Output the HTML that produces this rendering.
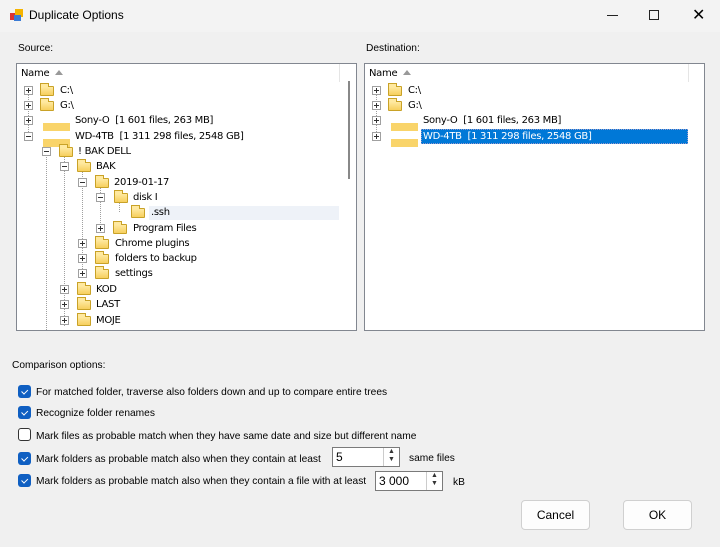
<!DOCTYPE html>
<html><head><meta charset="utf-8"><style>
*{margin:0;padding:0;box-sizing:border-box}
body{width:720px;height:547px;background:#f0f0f0;font-family:"Liberation Sans",sans-serif;font-size:12px;color:#000;position:relative;overflow:hidden}
.a{position:absolute;white-space:nowrap}
.title{left:0;top:0;width:720px;height:32px;background:#f3f3f3}
.pane{background:#fff;border:1px solid #828790}
.t{font-family:"DejaVu Sans",sans-serif;font-size:10px;line-height:14px;letter-spacing:-0.3px;margin-top:1px}
.ex{width:9px;height:9px;border:1px solid #a0a0a0;background:#fff}
.ex:before{content:"";position:absolute;left:1px;top:3px;width:5px;height:1px;background:#333}
.ex.p:after{content:"";position:absolute;left:3px;top:1px;width:1px;height:5px;background:#333}
.f{width:14px;height:10px;border:1px solid #c9a227;background:linear-gradient(#ffe9a0,#f7cf5e);border-radius:1px;margin-top:1px}
.f:before{content:"";position:absolute;left:-1px;top:-4px;width:7px;height:3px;border:1px solid #c9a227;border-bottom:none;background:#ffe9a0}
.dr{width:27px;height:8px;background:#f9d46a}
.cb{width:13px;height:13px;border-radius:3px;background:#0f5fc2}
.cb:after{content:"";position:absolute;left:3px;top:2px;width:5px;height:3px;border-left:1.5px solid #fff;border-bottom:1.5px solid #fff;transform:rotate(-45deg) translate(-1px,2px)}
.cb.u{background:#fff;border:1px solid #333}
.cb.u:after{display:none}
.lbl{font-size:10.2px}
.o{margin-top:1px}
.spin{height:20px;background:#fff;border:1px solid #7a7a7a;font-size:12px;padding:2px 3px}
.btn{width:69px;height:30px;background:#fdfdfd;border:1px solid #d0d0d0;border-radius:4px;text-align:center;line-height:28px;font-size:12px}
.vl{border-left:1px dotted #a0a0a0}
</style></head><body>
<div class="a title"></div>
<div class="a" style="left:10px;top:9px;width:13px;height:12px">
<div class="a" style="left:0;top:4px;width:7px;height:7px;background:#d33"></div>
<div class="a" style="left:5px;top:0;width:8px;height:8px;background:#f5b400"></div>
<div class="a" style="left:4px;top:6px;width:7px;height:6px;background:#3a7bd5"></div></div>
<div class="a" style="left:29px;top:8px;font-size:12px">Duplicate Options</div>
<div class="a" style="left:607px;top:15px;width:11px;height:1px;background:#222"></div>
<div class="a" style="left:649px;top:10px;width:10px;height:10px;border:1px solid #222"></div>
<div class="a" style="left:692px;top:9px;font-size:16px;line-height:14px">✕</div>

<div class="a lbl" style="left:18px;top:43px">Source:</div>
<div class="a lbl" style="left:366px;top:43px">Destination:</div>

<div class="a pane" style="left:16px;top:63px;width:341px;height:268px;overflow:hidden">
<div class="a" style="left:331px;top:17px;width:2px;height:98px;background:#888"></div>
<div class="a" style="left:322px;top:0;width:1px;height:18px;background:#e5e5e5"></div>
</div>
<div class="a pane" style="left:364px;top:63px;width:341px;height:268px"><div class="a" style="left:323px;top:0;width:1px;height:18px;background:#e5e5e5"></div></div>

<div class="a t" style="left:21px;top:66px">Name</div>
<div class="a" style="left:55px;top:70px;border:4px solid transparent;border-bottom:5px solid #999;border-top:none"></div>
<div class="a t" style="left:369px;top:66px">Name</div>
<div class="a" style="left:403px;top:70px;border:4px solid transparent;border-bottom:5px solid #999;border-top:none"></div>

<div class="a vl" style="left:28px;top:92px;height:44px"></div>
<div class="a vl" style="left:46px;top:140px;height:190px"></div>
<div class="a vl" style="left:64px;top:156px;height:170px"></div>
<div class="a vl" style="left:82px;top:171px;height:104px"></div>
<div class="a vl" style="left:100px;top:186px;height:43px"></div>
<div class="a vl" style="left:119px;top:202px;height:10px"></div>
<div class="a" style="left:149px;top:206px;width:190px;height:14px;background:#eef2f8"></div>

<div class="a ex p" style="left:24px;top:86px"></div><div class="a f" style="left:40px;top:85px"></div><div class="a t" style="left:60px;top:83px">C:\</div>
<div class="a ex p" style="left:24px;top:101px"></div><div class="a f" style="left:40px;top:100px"></div><div class="a t" style="left:60px;top:98px">G:\</div>
<div class="a ex p" style="left:24px;top:116px"></div><div class="a dr" style="left:43px;top:123px"></div><div class="a t" style="left:75px;top:113px">Sony-O&nbsp; [1 601 files, 263 MB]</div>
<div class="a ex" style="left:24px;top:132px"></div><div class="a dr" style="left:43px;top:139px"></div><div class="a t" style="left:75px;top:129px">WD-4TB&nbsp; [1 311 298 files, 2548 GB]</div>
<div class="a ex" style="left:42px;top:147px"></div><div class="a f" style="left:59px;top:146px"></div><div class="a t" style="left:78px;top:144px">! BAK DELL</div>
<div class="a ex" style="left:60px;top:162px"></div><div class="a f" style="left:77px;top:161px"></div><div class="a t" style="left:96px;top:159px">BAK</div>
<div class="a ex" style="left:78px;top:178px"></div><div class="a f" style="left:95px;top:177px"></div><div class="a t" style="left:114px;top:175px">2019-01-17</div>
<div class="a ex" style="left:96px;top:193px"></div><div class="a f" style="left:114px;top:192px"></div><div class="a t" style="left:133px;top:190px">disk I</div>
<div class="a f" style="left:131px;top:207px"></div><div class="a t" style="left:151px;top:205px">.ssh</div>
<div class="a ex p" style="left:96px;top:224px"></div><div class="a f" style="left:113px;top:223px"></div><div class="a t" style="left:133px;top:221px">Program Files</div>
<div class="a ex p" style="left:78px;top:239px"></div><div class="a f" style="left:95px;top:238px"></div><div class="a t" style="left:115px;top:236px">Chrome plugins</div>
<div class="a ex p" style="left:78px;top:254px"></div><div class="a f" style="left:95px;top:253px"></div><div class="a t" style="left:115px;top:251px">folders to backup</div>
<div class="a ex p" style="left:78px;top:269px"></div><div class="a f" style="left:95px;top:268px"></div><div class="a t" style="left:115px;top:266px">settings</div>
<div class="a ex p" style="left:60px;top:285px"></div><div class="a f" style="left:77px;top:284px"></div><div class="a t" style="left:96px;top:282px">KOD</div>
<div class="a ex p" style="left:60px;top:300px"></div><div class="a f" style="left:77px;top:299px"></div><div class="a t" style="left:96px;top:297px">LAST</div>
<div class="a ex p" style="left:60px;top:316px"></div><div class="a f" style="left:77px;top:315px"></div><div class="a t" style="left:96px;top:313px">MOJE</div>

<div class="a vl" style="left:376px;top:92px;height:44px"></div>
<div class="a ex p" style="left:372px;top:86px"></div><div class="a f" style="left:388px;top:85px"></div><div class="a t" style="left:408px;top:83px">C:\</div>
<div class="a ex p" style="left:372px;top:101px"></div><div class="a f" style="left:388px;top:100px"></div><div class="a t" style="left:408px;top:98px">G:\</div>
<div class="a ex p" style="left:372px;top:116px"></div><div class="a dr" style="left:391px;top:123px"></div><div class="a t" style="left:423px;top:113px">Sony-O&nbsp; [1 601 files, 263 MB]</div>
<div class="a ex p" style="left:372px;top:132px"></div><div class="a dr" style="left:391px;top:139px"></div>
<div class="a" style="left:421px;top:129px;width:267px;height:15px;background:#0078d7;border:1px dotted #99c"></div>
<div class="a t" style="left:423px;top:129px;color:#fff">WD-4TB&nbsp; [1 311 298 files, 2548 GB]</div>

<div class="a lbl" style="left:12px;top:360px">Comparison options:</div>
<div class="a cb" style="left:18px;top:385px"></div><div class="a lbl o" style="left:36px;top:386px">For matched folder, traverse also folders down and up to compare entire trees</div>
<div class="a cb" style="left:18px;top:406px"></div><div class="a lbl o" style="left:36px;top:407px">Recognize folder renames</div>
<div class="a cb u" style="left:18px;top:428px"></div><div class="a lbl o" style="left:36px;top:430px">Mark files as probable match when they have same date and size but different name</div>
<div class="a cb" style="left:18px;top:452px"></div><div class="a lbl o" style="left:36px;top:453px">Mark folders as probable match also when they contain at least</div>
<div class="a spin" style="left:332px;top:447px;width:68px">5</div>
<div class="a" style="left:383px;top:448px;width:16px;height:18px;border-left:1px solid #ccc;background:#fff;font-size:7px;line-height:8px;text-align:center;color:#333">▲<br>▼</div>
<div class="a lbl o" style="left:409px;top:452px">same files</div>
<div class="a cb" style="left:18px;top:474px"></div><div class="a lbl o" style="left:36px;top:475px">Mark folders as probable match also when they contain a file with at least</div>
<div class="a spin" style="left:375px;top:471px;width:68px">3 000</div>
<div class="a" style="left:426px;top:472px;width:16px;height:18px;border-left:1px solid #ccc;background:#fff;font-size:7px;line-height:8px;text-align:center;color:#333">▲<br>▼</div>
<div class="a lbl o" style="left:453px;top:476px">kB</div>

<div class="a btn" style="left:521px;top:500px">Cancel</div>
<div class="a btn" style="left:623px;top:500px">OK</div>
</body></html>
